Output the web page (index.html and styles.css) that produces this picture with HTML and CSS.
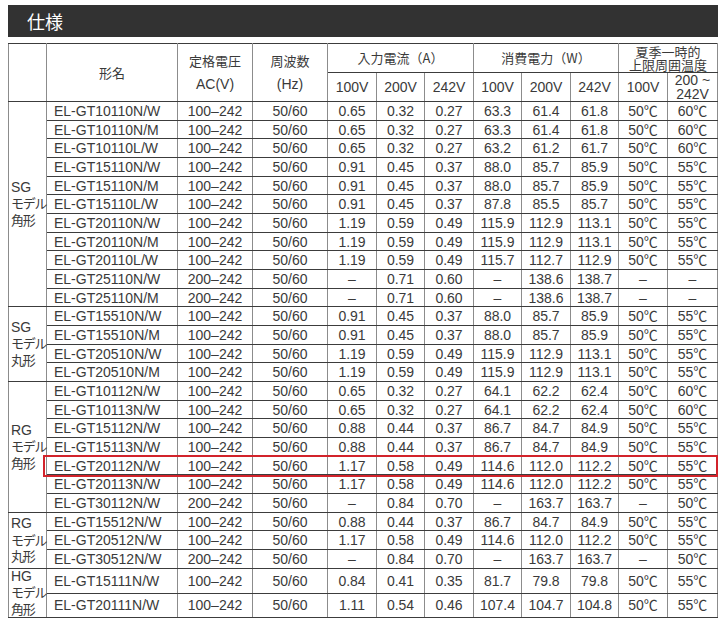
FILE: index.html
```html
<!DOCTYPE html>
<html lang="ja">
<head>
<meta charset="utf-8">
<title>仕様</title>
<link rel="stylesheet" href="styles.css">
</head>
<body>
<div class="title-bar"><h2 class="title">仕様</h2></div>
<div class="spec">
<table class="spec-table">
<colgroup>
<col style="width:38px"><col style="width:131px"><col style="width:75px"><col style="width:75px">
<col style="width:49px"><col style="width:48px"><col style="width:49px">
<col style="width:48px"><col style="width:49px"><col style="width:48px">
<col style="width:49px"><col style="width:50px">
</colgroup>
<thead>
<tr class="h1">
<th rowspan="2"></th>
<th rowspan="2" class="jp">形名</th>
<th rowspan="2" class="two"><span class="jp">定格電圧</span><br>AC(V)</th>
<th rowspan="2" class="two"><span class="jp">周波数</span><br>(Hz)</th>
<th colspan="3" class="jp">入力電流（A）</th>
<th colspan="3" class="jp">消費電力（W）</th>
<th colspan="2" class="jp tight"><span class="ln">夏季一時的</span><span class="ln">上限周囲温度</span></th>
</tr>
<tr class="h2">
<th>100V</th><th>200V</th><th>242V</th>
<th>100V</th><th>200V</th><th>242V</th>
<th>100V</th><th class="wrap"><span class="ln">200 ~</span><span class="ln">242V</span></th>
</tr>
</thead>
<tbody>
<tr class="r"><td rowspan="11" class="grp">SG<br><span class="jp">モデル<br>角形</span></td><td class="name">EL-GT10110N/W</td><td>100–242</td><td>50/60</td><td>0.65</td><td>0.32</td><td>0.27</td><td>63.3</td><td>61.4</td><td>61.8</td><td>50℃</td><td>60℃</td></tr>
<tr class="r"><td class="name">EL-GT10110N/M</td><td>100–242</td><td>50/60</td><td>0.65</td><td>0.32</td><td>0.27</td><td>63.3</td><td>61.4</td><td>61.8</td><td>50℃</td><td>60℃</td></tr>
<tr class="r"><td class="name">EL-GT10110L/W</td><td>100–242</td><td>50/60</td><td>0.65</td><td>0.32</td><td>0.27</td><td>63.2</td><td>61.2</td><td>61.7</td><td>50℃</td><td>60℃</td></tr>
<tr class="r"><td class="name">EL-GT15110N/W</td><td>100–242</td><td>50/60</td><td>0.91</td><td>0.45</td><td>0.37</td><td>88.0</td><td>85.7</td><td>85.9</td><td>50℃</td><td>55℃</td></tr>
<tr class="r"><td class="name">EL-GT15110N/M</td><td>100–242</td><td>50/60</td><td>0.91</td><td>0.45</td><td>0.37</td><td>88.0</td><td>85.7</td><td>85.9</td><td>50℃</td><td>55℃</td></tr>
<tr class="r"><td class="name">EL-GT15110L/W</td><td>100–242</td><td>50/60</td><td>0.91</td><td>0.45</td><td>0.37</td><td>87.8</td><td>85.5</td><td>85.7</td><td>50℃</td><td>55℃</td></tr>
<tr class="r"><td class="name">EL-GT20110N/W</td><td>100–242</td><td>50/60</td><td>1.19</td><td>0.59</td><td>0.49</td><td>115.9</td><td>112.9</td><td>113.1</td><td>50℃</td><td>55℃</td></tr>
<tr class="r"><td class="name">EL-GT20110N/M</td><td>100–242</td><td>50/60</td><td>1.19</td><td>0.59</td><td>0.49</td><td>115.9</td><td>112.9</td><td>113.1</td><td>50℃</td><td>55℃</td></tr>
<tr class="r"><td class="name">EL-GT20110L/W</td><td>100–242</td><td>50/60</td><td>1.19</td><td>0.59</td><td>0.49</td><td>115.7</td><td>112.7</td><td>112.9</td><td>50℃</td><td>55℃</td></tr>
<tr class="r"><td class="name">EL-GT25110N/W</td><td>200–242</td><td>50/60</td><td>–</td><td>0.71</td><td>0.60</td><td>–</td><td>138.6</td><td>138.7</td><td>–</td><td>–</td></tr>
<tr class="r"><td class="name">EL-GT25110N/M</td><td>200–242</td><td>50/60</td><td>–</td><td>0.71</td><td>0.60</td><td>–</td><td>138.6</td><td>138.7</td><td>–</td><td>–</td></tr>

<tr class="r"><td rowspan="4" class="grp">SG<br><span class="jp">モデル<br>丸形</span></td><td class="name">EL-GT15510N/W</td><td>100–242</td><td>50/60</td><td>0.91</td><td>0.45</td><td>0.37</td><td>88.0</td><td>85.7</td><td>85.9</td><td>50℃</td><td>55℃</td></tr>
<tr class="r"><td class="name">EL-GT15510N/M</td><td>100–242</td><td>50/60</td><td>0.91</td><td>0.45</td><td>0.37</td><td>88.0</td><td>85.7</td><td>85.9</td><td>50℃</td><td>55℃</td></tr>
<tr class="r"><td class="name">EL-GT20510N/W</td><td>100–242</td><td>50/60</td><td>1.19</td><td>0.59</td><td>0.49</td><td>115.9</td><td>112.9</td><td>113.1</td><td>50℃</td><td>55℃</td></tr>
<tr class="r"><td class="name">EL-GT20510N/M</td><td>100–242</td><td>50/60</td><td>1.19</td><td>0.59</td><td>0.49</td><td>115.9</td><td>112.9</td><td>113.1</td><td>50℃</td><td>55℃</td></tr>

<tr class="r"><td rowspan="7" class="grp">RG<br><span class="jp">モデル<br>角形</span></td><td class="name">EL-GT10112N/W</td><td>100–242</td><td>50/60</td><td>0.65</td><td>0.32</td><td>0.27</td><td>64.1</td><td>62.2</td><td>62.4</td><td>50℃</td><td>60℃</td></tr>
<tr class="r"><td class="name">EL-GT10113N/W</td><td>100–242</td><td>50/60</td><td>0.65</td><td>0.32</td><td>0.27</td><td>64.1</td><td>62.2</td><td>62.4</td><td>50℃</td><td>60℃</td></tr>
<tr class="r"><td class="name">EL-GT15112N/W</td><td>100–242</td><td>50/60</td><td>0.88</td><td>0.44</td><td>0.37</td><td>86.7</td><td>84.7</td><td>84.9</td><td>50℃</td><td>55℃</td></tr>
<tr class="r"><td class="name">EL-GT15113N/W</td><td>100–242</td><td>50/60</td><td>0.88</td><td>0.44</td><td>0.37</td><td>86.7</td><td>84.7</td><td>84.9</td><td>50℃</td><td>55℃</td></tr>
<tr class="r"><td class="name">EL-GT20112N/W</td><td>100–242</td><td>50/60</td><td>1.17</td><td>0.58</td><td>0.49</td><td>114.6</td><td>112.0</td><td>112.2</td><td>50℃</td><td>55℃</td></tr>
<tr class="r"><td class="name">EL-GT20113N/W</td><td>100–242</td><td>50/60</td><td>1.17</td><td>0.58</td><td>0.49</td><td>114.6</td><td>112.0</td><td>112.2</td><td>50℃</td><td>55℃</td></tr>
<tr class="r"><td class="name">EL-GT30112N/W</td><td>200–242</td><td>50/60</td><td>–</td><td>0.84</td><td>0.70</td><td>–</td><td>163.7</td><td>163.7</td><td>–</td><td>50℃</td></tr>

<tr class="r"><td rowspan="3" class="grp">RG<br><span class="jp">モデル<br>丸形</span></td><td class="name">EL-GT15512N/W</td><td>100–242</td><td>50/60</td><td>0.88</td><td>0.44</td><td>0.37</td><td>86.7</td><td>84.7</td><td>84.9</td><td>50℃</td><td>55℃</td></tr>
<tr class="r"><td class="name">EL-GT20512N/W</td><td>100–242</td><td>50/60</td><td>1.17</td><td>0.58</td><td>0.49</td><td>114.6</td><td>112.0</td><td>112.2</td><td>50℃</td><td>55℃</td></tr>
<tr class="r"><td class="name">EL-GT30512N/W</td><td>200–242</td><td>50/60</td><td>–</td><td>0.84</td><td>0.70</td><td>–</td><td>163.7</td><td>163.7</td><td>–</td><td>50℃</td></tr>

<tr class="hg"><td rowspan="2" class="grp">HG<br><span class="jp">モデル<br>角形</span></td><td class="name">EL-GT15111N/W</td><td>100–242</td><td>50/60</td><td>0.84</td><td>0.41</td><td>0.35</td><td>81.7</td><td>79.8</td><td>79.8</td><td>50℃</td><td>55℃</td></tr>
<tr class="hg"><td class="name">EL-GT20111N/W</td><td>100–242</td><td>50/60</td><td>1.11</td><td>0.54</td><td>0.46</td><td>107.4</td><td>104.7</td><td>104.8</td><td>50℃</td><td>55℃</td></tr>
</tbody>
</table>
<div class="highlight" aria-hidden="true"></div>
</div>
</body>
</html>
```

FILE: styles.css
```css
html, body {
  background: #ffffff;
}
body {
  margin: 5px 8px 0 8px;
  font-family: "Liberation Sans", Arial, "Noto Sans CJK JP", sans-serif;
  color: #3a3a3a;
}
.title-bar {
  width: 710px;
  height: 32px;
  background: #323232;
  display: flex;
  align-items: center;
  padding-left: 19px;
  box-sizing: border-box;
}
.title {
  margin: 0;
  font-family: "Noto Sans CJK JP", sans-serif;
  font-weight: normal;
  font-size: 18px;
  line-height: 20px;
  color: #ffffff;
}
.spec {
  position: relative;
  margin-top: 6px;
  width: 710px;
}
.spec-table {
  width: 709px;
  table-layout: fixed;
  border-collapse: collapse;
  font-size: 14px;
  color: #3a3a3a;
}
.spec-table th,
.spec-table td {
  padding: 0;
  border-left: 1px solid #8c8c8c;
  border-right: 1px solid #8c8c8c;
  border-top: 1px solid #3c3c3c;
  border-bottom: 1px solid #3c3c3c;
  text-align: center;
  vertical-align: middle;
  font-weight: normal;
  white-space: nowrap;
}
.spec-table th {
  line-height: 16px;
}
.jp {
  font-family: "Noto Sans CJK JP", sans-serif;
  font-size: 13px;
}
.ln {
  display: block;
}
.spec-table tr.h1 { height: 29px; }
.spec-table tr.h2 { height: 29px; }
.spec-table th.two {
  line-height: 23px;
}
.spec-table th.tight {
  line-height: 13px;
}
.spec-table th.wrap {
  line-height: 14px;
}
.spec-table td {
  line-height: 16px;
}
.spec-table tr.r { height: 18.68px; }
.spec-table tr.hg { height: 21.5px; }
.spec-table td.name {
  text-align: left;
  padding-left: 7px;
}
.spec-table td.grp {
  text-align: left;
  padding-left: 2px;
  line-height: 15.5px;
  font-size: 14px;
}
.spec-table td.grp .jp {
  font-size: 13px;
  letter-spacing: -1.3px;
}
.highlight {
  position: absolute;
  left: 35px;
  top: 412px;
  width: 675px;
  height: 22px;
  border: 2px solid #d2232b;
  box-sizing: border-box;
  pointer-events: none;
}
```
